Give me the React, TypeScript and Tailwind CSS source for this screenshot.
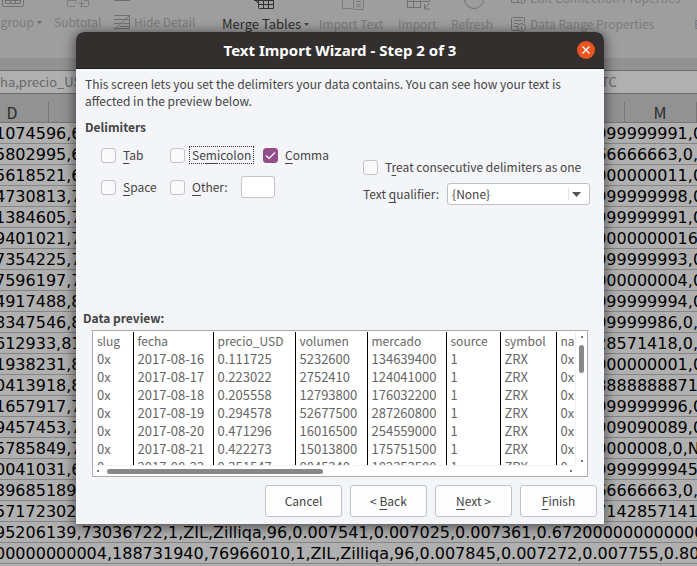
import React from "react";

const sheetRows: [string, string][] = [
  ["1074596,6", "9999999991,0"],
  ["5802995,6", "666666663,0,"],
  ["5618521,6", "0000000011,0"],
  ["4730813,7", "9999999998,0"],
  ["1384605,7", "9999999991,0"],
  ["9401021,7", "00000000016"],
  ["7354225,7", "9999999993,0"],
  ["7596197,7", "0000000004,0"],
  ["4917488,8", "9999999994,0"],
  ["8347546,8", "999999986,0,"],
  ["612933,81", "428571418,0,"],
  ["1938231,8", "0000000001,0"],
  ["0413918,8", "88888888871"],
  ["1657917,7", "9999999996,0"],
  ["9457453,7", "0909090089,0"],
  ["5785849,7", "00000008,0,N"],
  ["0041031,6", "99999999945"],
  ["39685189", "666666663,0,"],
  ["57172302", "57142857141"],
];

const fullRows = [
  "95206139,73036722,1,ZIL,Zilliqa,96,0.007541,0.007025,0.007361,0.67200000000000007",
  "00000000004,188731940,76966010,1,ZIL,Zilliqa,96,0.007845,0.007272,0.007755,0.8042",
];

const previewHead = ["slug", "fecha", "precio_USD", "volumen", "mercado", "source", "symbol", "name"];
const previewRows = [
  ["0x", "2017-08-16", "0.111725", "5232600", "134639400", "1", "ZRX", "0x"],
  ["0x", "2017-08-17", "0.223022", "2752410", "124041000", "1", "ZRX", "0x"],
  ["0x", "2017-08-18", "0.205558", "12793800", "176032200", "1", "ZRX", "0x"],
  ["0x", "2017-08-19", "0.294578", "52677500", "287260800", "1", "ZRX", "0x"],
  ["0x", "2017-08-20", "0.471296", "16016500", "254559000", "1", "ZRX", "0x"],
  ["0x", "2017-08-21", "0.422273", "15013800", "175751500", "1", "ZRX", "0x"],
  ["0x", "2017-08-22", "0.351547", "8045340", "182353500", "1", "ZRX", "0x"],
];

function Key({ children }: { children: React.ReactNode }) {
  return <span className="underline decoration-1 underline-offset-3 [text-decoration-skip-ink:none]">{children}</span>;
}

function Check({ id, checked, focused, children }: { id: string; checked?: boolean; focused?: boolean; children: React.ReactNode }) {
  return (
    <div className="flex items-center gap-1 whitespace-nowrap">
      <span className="relative flex">
        <input
          id={id}
          type="checkbox"
          defaultChecked={checked}
          className="peer size-[15px] appearance-none rounded-[3px] border border-[#c3c3c9] bg-[#fafafb] checked:border-[#924d8b] checked:bg-[#924d8b]"
        />
        <svg viewBox="0 0 15 15" className="pointer-events-none absolute inset-0 hidden size-[15px] peer-checked:block" fill="none" stroke="#fff" strokeWidth="1.2">
          <path d="M3 7.5 L6 10.5 L12 4.5" />
        </svg>
      </span>
      <label htmlFor={id} className={focused ? "border border-dotted border-[#333] px-0.5 leading-4" : "border border-transparent px-0.5 leading-4"}>
        {children}
      </label>
    </div>
  );
}

function Toolbar() {
  return (
    <div className="flex h-[58px] overflow-hidden whitespace-nowrap bg-[#9e9e9e] text-[#7b7b7b]">
      <div className="flex w-[54px] shrink-0 flex-col">
        <svg className="h-3 w-10" viewBox="0 0 40 12" fill="none" stroke="#707070">
          <path d="M2.500 -2V5.500q0 1 1 1H22.500q1 0 1 -1V-2M5.500 0V3.500H20.500V0M10.500 0V3M15.500 0V3M5 0.500H21" />
        </svg>
        <div className="flex items-center gap-[3px] leading-5">
          <span className="flex w-[34px] justify-end overflow-hidden">Ungroup</span>
          <svg className="size-[5px]" viewBox="0 0 5 5"><path d="M0 1H5L2.500 4Z" fill="#6b6b6b" /></svg>
        </div>
      </div>
      <div className="flex w-[60px] shrink-0 flex-col">
        <svg className="h-3 w-12" viewBox="0 0 48 12" fill="none" stroke="#7e7e7e">
          <path d="M13.500 0V5.500q0 1 1 1H21M21 0.500H13M26 6.500H33q1.500 0 1.500 -1V0.500H30M24.500 3.500H30.500M27.500 0.500V6.500M22 0V4" />
        </svg>
        <span className="leading-5">Subtotal</span>
      </div>
      <div className="flex w-[108px] shrink-0 flex-col">
        <svg className="h-3 w-4" viewBox="0 0 16 12"><path d="M0 .5H16" stroke="#6c6c6c" /></svg>
        <div className="flex items-center gap-1 leading-5">
          <svg className="size-4" viewBox="0 0 16 16" fill="none" stroke="#707070">
            <path d="M0 1.500H16M0 5.500H12M0 9.500H8M0 14.500H16M15 2L1 15M9 9.500H16M6 12.500H16M12 5.500H16M15.500 1V15" />
          </svg>
          <span>Hide Detail</span>
        </div>
      </div>
      <div className="flex w-[97px] shrink-0 flex-col text-[#2b2b2b]">
        <svg className="h-[14px] w-[54px]" viewBox="0 0 54 14" fill="none" stroke="#303030">
          <path d="M36.500 0V7.500q0 1 1 1H51.500V0M36 .5H52M36 4.500H52M41.500 0V8M46.500 0V8M32 .5H36M33 0L36 3" />
        </svg>
        <div className="flex items-center gap-[3px] leading-5">
          <span className="text-[13px]">Merge Tables</span>
          <svg className="size-[5px]" viewBox="0 0 5 5"><path d="M0 1H5L2.500 4Z" fill="#444" /></svg>
        </div>
      </div>
      <div className="flex w-[79px] shrink-0 flex-col">
        <svg className="h-[14px] w-[50px]" viewBox="0 0 50 14" fill="none" stroke="#7b7b7b">
          <path d="M23.500 0V8.500H33M34.500 0V9.500H44.500V0M37 1.500H42M37 4.500H42M37 6.500H42" />
        </svg>
        <span className="leading-5">Import Text</span>
      </div>
      <div className="flex w-[53px] shrink-0 flex-col">
        <svg className="h-[14px] w-10" viewBox="0 0 40 14" fill="none" stroke="#707070">
          <path d="M9.500 0V7.500H23M9 1.500H31.500V0M15.500 0V7M22.500 0V7M32 3L26.500 8.500M26.500 4V9H32" />
        </svg>
        <span className="leading-5">Import</span>
      </div>
      <div className="flex w-[59px] shrink-0 flex-col">
        <svg className="h-[14px] w-10" viewBox="0 0 40 14" fill="none" stroke="#707070">
          <circle cx="23" cy="-1" r="9.500" />
        </svg>
        <span className="leading-5">Refresh</span>
      </div>
      <div className="flex w-[184px] shrink-0 flex-col">
        {["Edit Connection Properties", "Data Range Properties"].map((t, i) => (
          <div key={t} className={i === 0 ? "-mt-3 flex h-[26px] items-start gap-1 leading-5" : "flex items-center gap-1 leading-5"}>
            <svg className="size-4 shrink-0" viewBox="0 0 16 16" fill="none" stroke="#6f6f6f">
              <path d="M8 14.500H2.500q-1 0 -1 -1V2.500q0 -1 1 -1H13.500q1 0 1 1V7M4 4.500H12M4 7.500H8M4 10.500H7" />
              <circle cx="11.500" cy="11.500" r="4" />
              <path d="M11.500 11V14M11.500 9V10" />
            </svg>
            <span>{t}</span>
          </div>
        ))}
      </div>
      <span className="pt-[14px] leading-5">Edit</span>
    </div>
  );
}

function Spreadsheet() {
  return (
    <div className="h-screen overflow-hidden bg-[#b0b0b0]">
      <Toolbar />
      <div className="h-3 bg-[#929292]" />
      <div className="flex h-6 items-center justify-between whitespace-nowrap border-y border-[#6c6c6c] bg-[#b0b0b0] text-[13px] text-[#686868]">
        <span>ha,precio_USD</span>
        <span className="w-24">TC</span>
      </div>
      <div className="-ml-6 flex h-[29px] border-b border-[#777] bg-[#929292] pt-2 text-base text-[#2b2b2b]">
        {["D", "E", "F", "G", "H", "I", "J", "K", "L", "M", "N"].map((c) => (
          <div key={c} className="-mr-px w-[73px] shrink-0 border-r border-[#777] text-center leading-5">{c}</div>
        ))}
      </div>
      <div className="whitespace-nowrap font-['DejaVu_Sans',sans-serif] text-base text-black">
        {sheetRows.map(([a, b], i) => (
          <div key={i} className="-ml-[5px] flex h-[21px] border-b border-[#868686] leading-[22px]">
            <span className="w-[591px] shrink-0">{a}</span>
            <span>{b}</span>
          </div>
        ))}
        {fullRows.map((t) => (
          <div key={t} className="-ml-[5px] h-[21px] border-b border-[#868686] leading-[22px]">{t}</div>
        ))}
      </div>
    </div>
  );
}

function DataPreview() {
  return (
    <div className="flex h-[147px] flex-col border border-[#adadb0] bg-white pt-px">
      <div className="flex h-[134px] shrink-0">
        <div className="min-w-0 flex-1 overflow-hidden border-b border-r border-[#f0f0f0] text-[#666]">
          <table className="w-[520px] table-fixed border-collapse text-left leading-[18px]">
            <colgroup>
              <col className="w-10" />
              <col className="w-20" />
              <col className="w-[82px]" />
              <col className="w-[72px]" />
              <col className="w-[79px]" />
              <col className="w-[54px]" />
              <col className="w-14" />
              <col />
            </colgroup>
            <thead>
              <tr>
                {previewHead.map((h) => (
                  <th key={h} className="border-l border-black p-0 pl-1 font-normal first:border-l-0">{h}</th>
                ))}
              </tr>
            </thead>
            <tbody>
              {previewRows.map((r) => (
                <tr key={r[1]}>
                  {r.map((c, i) => (
                    <td key={i} className="border-l border-black p-0 pl-1 text-[13px] first:border-l-0">{c}</td>
                  ))}
                </tr>
              ))}
            </tbody>
          </table>
        </div>
        <div className="flex w-[11px] shrink-0 flex-col items-center justify-between py-1">
          <div className="size-0.5 bg-[#777]" />
          <div className="mt-[7px] h-7 w-[5px] rounded-full bg-[#888]" />
          <div className="flex-1" />
          <div className="size-0.5 bg-[#777]" />
        </div>
      </div>
      <div className="flex flex-1 items-center pl-1 pr-[15px]">
        <div className="size-0.5 bg-[#777]" />
        <div className="ml-2 h-[5px] w-[216px] rounded-full bg-[#888]" />
        <div className="ml-auto size-0.5 bg-[#777]" />
      </div>
    </div>
  );
}

function WizardDialog() {
  const button = "h-8 w-[77px] rounded-[3px] border border-[#bfc3cb] bg-[#fdfdfe] text-[#444]";
  return (
    <div className="absolute inset-x-0 top-8 flex justify-center pr-[17px]">
      <div role="dialog" aria-labelledby="wizard-title" className="w-[528px] rounded-t-lg bg-[#f4f5f8] text-[#444] shadow-[0_2px_12px_2px_rgba(0,0,0,0.5)]">
        <div className="flex h-[37px] items-center rounded-t-lg border-b border-[#1f1d1d] bg-[#332f2f] pl-[27px] pr-[9px]">
          <h1 id="wizard-title" className="flex-1 text-center font-['Noto_Sans',sans-serif] text-[15px] font-bold text-white">
            Text Import Wizard - Step 2 of 3
          </h1>
          <button aria-label="Close" className="flex size-[18px] items-center justify-center rounded-full bg-[#e95420]">
            <svg className="size-2" viewBox="0 0 8 8" stroke="#fff" strokeWidth="1.3"><path d="M.5 .5L7.500 7.500M7.500 .5L.5 7.500" /></svg>
          </button>
        </div>
        <div className="px-[7px] pb-[7px] pt-1.5">
          <p className="pl-0.5 pr-5 leading-[17px]">
            This screen lets you set the delimiters your data contains. You can see how your text is<br />affected in the preview below.
          </p>
          <h2 className="mt-2 pl-0.5 font-bold leading-5">Delimiters</h2>
          <div className="flex pl-[18px] pt-[7px]">
            <div className="grid grid-cols-[69px_93px_100px] grid-rows-[22px_22px] content-start gap-y-[10px]">
              <Check id="tab"><Key>T</Key>ab</Check>
              <Check id="semicolon" focused>Se<Key>m</Key>icolon</Check>
              <Check id="comma" checked><Key>C</Key>omma</Check>
              <Check id="space"><Key>S</Key>pace</Check>
              <div className="col-span-2 flex items-center">
                <div className="w-[71px]"><Check id="other"><Key>O</Key>ther:</Check></div>
                <input aria-label="Other delimiter" className="h-[22px] w-[34px] rounded-[3px] border border-[#c3c3c9] bg-white" />
              </div>
            </div>
            <div className="flex-1 pt-[14px]">
              <Check id="consecutive">T<Key>r</Key>eat consecutive delimiters as one</Check>
              <div className="mt-[7px] flex items-center justify-end whitespace-nowrap pr-2">
                <label htmlFor="qualifier" className="mr-2">Text <Key>q</Key>ualifier:</label>
                <span className="relative flex">
                  <select id="qualifier" className="h-[22px] w-[143px] appearance-none rounded-[3px] border border-[#c0c1c6] bg-white pl-1 leading-5">
                    <option>{"{None}"}</option>
                  </select>
                  <svg className="pointer-events-none absolute right-2 top-[5px] h-3 w-[14px]" viewBox="0 0 14 12">
                    <path d="M.5 0V12" stroke="#e2e2e4" />
                    <path d="M4 4H13L8.500 9Z" fill="#555" />
                  </svg>
                </span>
              </div>
            </div>
          </div>
          <h2 className="mt-[103px] font-bold leading-5">Data preview:</h2>
          <div className="mx-[9px] mt-0.5"><DataPreview /></div>
          <div className="mt-2 flex justify-end gap-2">
            <button className={button}>Cancel</button>
            <button className={button}>&lt; <Key>B</Key>ack</button>
            <button className={button}><Key>N</Key>ext &gt;</button>
            <button className={button}><Key>F</Key>inish</button>
          </div>
        </div>
      </div>
    </div>
  );
}

export default function App() {
  return (
    <main className="relative overflow-hidden font-['Noto_Sans_CJK_SC',sans-serif] text-xs">
      <Spreadsheet />
      <WizardDialog />
    </main>
  );
}
